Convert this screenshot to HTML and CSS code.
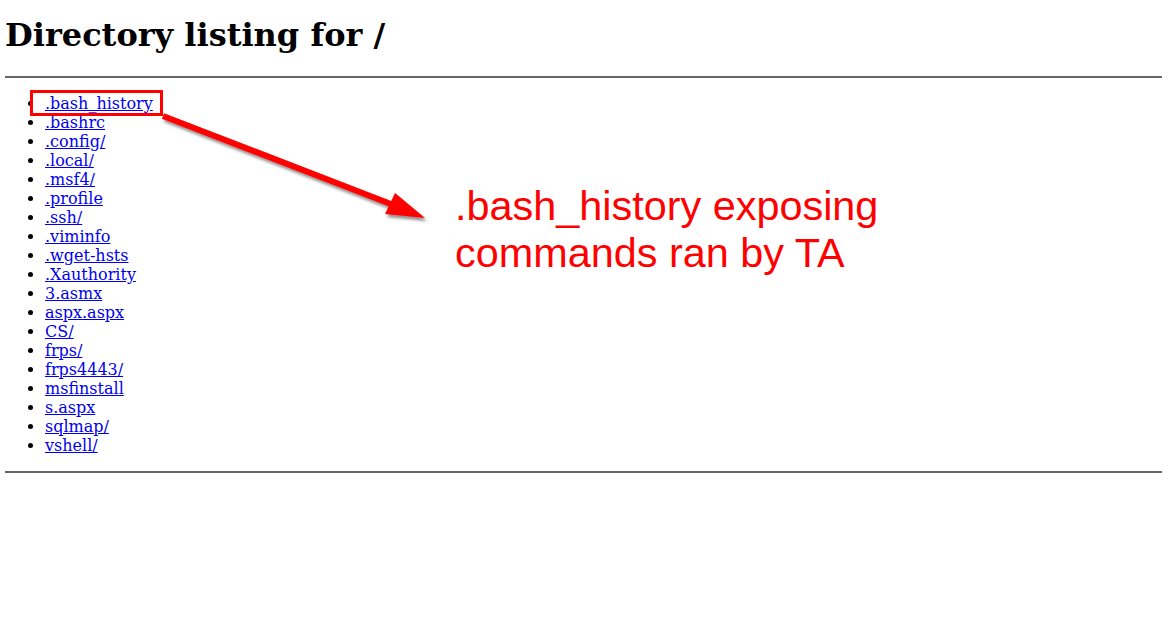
FILE: index.html
```html
<!DOCTYPE html>
<html>
<head>
<meta charset="utf-8">
<title>Directory listing for /</title>
<link rel="stylesheet" href="styles.css">
</head>
<body>
<h1 class="title">Directory listing for /</h1>
<hr class="rule">
<ul class="listing">
<li><a href=".bash_history">.bash_history</a></li>
<li><a href=".bashrc">.bashrc</a></li>
<li><a href=".config/">.config/</a></li>
<li><a href=".local/">.local/</a></li>
<li><a href=".msf4/">.msf4/</a></li>
<li><a href=".profile">.profile</a></li>
<li><a href=".ssh/">.ssh/</a></li>
<li><a href=".viminfo">.viminfo</a></li>
<li><a href=".wget-hsts">.wget-hsts</a></li>
<li><a href=".Xauthority">.Xauthority</a></li>
<li><a href="3.asmx">3.asmx</a></li>
<li><a href="aspx.aspx">aspx.aspx</a></li>
<li><a href="CS/">CS/</a></li>
<li><a href="frps/">frps/</a></li>
<li><a href="frps4443/">frps4443/</a></li>
<li><a href="msfinstall">msfinstall</a></li>
<li><a href="s.aspx">s.aspx</a></li>
<li><a href="sqlmap/">sqlmap/</a></li>
<li><a href="vshell/">vshell/</a></li>
</ul>
<hr class="rule">

<svg class="overlay" width="1162" height="638" viewBox="0 0 1162 638" xmlns="http://www.w3.org/2000/svg">
  <defs>
    <filter id="shadow" x="-10%" y="-10%" width="130%" height="140%">
      <feDropShadow dx="2" dy="3" stdDeviation="1.5" flood-color="#000" flood-opacity="0.45"/>
    </filter>
  </defs>
  <rect x="31.5" y="91.5" width="130" height="23" fill="none" stroke="#ff0000" stroke-width="3"/>
  <g filter="url(#shadow)">
    <line x1="163" y1="116" x2="396" y2="206" stroke="#ff0000" stroke-width="6"/>
    <polygon points="385,214 395,193 425,218" fill="#ff0000"/>
  </g>
</svg>
<div class="note">.bash_history exposing<br>commands ran by TA</div>
</body>
</html>
```

FILE: styles.css
```css
html, body {
  background: #ffffff;
}
body {
  margin: 0 0 0 5px;
  font-family: "DejaVu Serif", serif;
  font-size: 16px;
  color: #000;
  position: relative;
}
.title {
  font-size: 32px;
  font-weight: bold;
  margin: 16px 0 22px 0;
}
.rule {
  border: none;
  height: 2px;
  background: #666666;
  margin: 8px 0;
}
.listing {
  margin: 16px 0;
  padding-left: 40px;
}
.listing a {
  color: #0000ee;
}
.overlay {
  position: absolute;
  left: -5px;
  top: 0;
  pointer-events: none;
}
.note {
  position: absolute;
  left: 450px;
  top: 183px;
  font-family: "Liberation Sans", Arial, sans-serif;
  font-size: 41.4px;
  line-height: 47px;
  color: #ff0000;
  white-space: nowrap;
}
```
